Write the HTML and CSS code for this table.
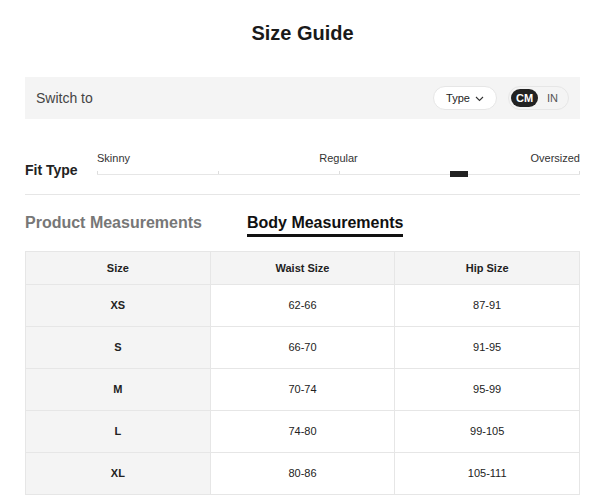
FILE: index.html
```html
<!DOCTYPE html>
<html lang="en">
<head>
<meta charset="utf-8">
<title>Size Guide</title>
<link rel="stylesheet" href="styles.css">
</head>
<body>
<div class="guide">
  <h1 class="title">Size Guide</h1>

  <div class="switch-bar">
    <span class="switch-label">Switch to</span>
    <div class="switch-controls">
      <button class="type-select">Type
        <svg class="chev" width="9" height="6" viewBox="0 0 9 6"><polyline points="1,1 4.5,4.5 8,1" fill="none" stroke="#333" stroke-width="1.1"/></svg>
      </button>
      <div class="unit-toggle">
        <span class="unit active">CM</span>
        <span class="unit">IN</span>
      </div>
    </div>
  </div>

  <div class="fit-row">
    <div class="fit-label">Fit Type</div>
    <div class="fit-scale">
      <div class="fit-names">
        <span class="name-left">Skinny</span>
        <span class="name-mid">Regular</span>
        <span class="name-right">Oversized</span>
      </div>
      <div class="fit-track">
        <span class="tick t0"></span>
        <span class="tick t1"></span>
        <span class="tick t2"></span>
        <span class="tick t3"></span>
        <span class="tick t4"></span>
        <span class="marker"></span>
      </div>
    </div>
  </div>

  <div class="tabs">
    <div class="tab">Product Measurements</div>
    <div class="tab active">Body Measurements</div>
  </div>

  <table class="size-table">
    <thead>
      <tr><th>Size</th><th>Waist Size</th><th>Hip Size</th></tr>
    </thead>
    <tbody>
      <tr><td class="size">XS</td><td>62-66</td><td>87-91</td></tr>
      <tr><td class="size">S</td><td>66-70</td><td>91-95</td></tr>
      <tr><td class="size">M</td><td>70-74</td><td>95-99</td></tr>
      <tr><td class="size">L</td><td>74-80</td><td>99-105</td></tr>
      <tr><td class="size">XL</td><td>80-86</td><td>105-111</td></tr>
    </tbody>
  </table>
</div>
</body>
</html>
```

FILE: styles.css
```css
* { box-sizing: border-box; }
html, body { margin: 0; padding: 0; background: #fff; }
body {
  font-family: "Liberation Sans", Arial, sans-serif;
  color: #222;
}
.guide {
  width: 555px;
  margin-left: 25px;
  padding-top: 21px;
}
.title {
  margin: 0;
  font-size: 20px;
  line-height: 24px;
  font-weight: bold;
  text-align: center;
  color: #1a1a1a;
}
.switch-bar {
  margin-top: 32px;
  height: 42px;
  background: #f4f4f4;
  display: flex;
  align-items: center;
  justify-content: space-between;
  padding: 0 11px 0 11px;
}
.switch-label {
  font-size: 14px;
  color: #444;
}
.switch-controls {
  display: flex;
  align-items: center;
  gap: 11px;
}
.type-select {
  height: 24px;
  width: 64px;
  border: 1px solid #e6e6e6;
  border-radius: 12px;
  background: #fff;
  font-family: inherit;
  font-size: 11px;
  color: #222;
  display: flex;
  align-items: center;
  justify-content: center;
  gap: 5px;
  padding: 0;
}
.chev { display: block; margin-top: 1px; }
.unit-toggle {
  height: 24px;
  width: 61px;
  border: 1px solid #e6e6e6;
  border-radius: 12px;
  display: flex;
  align-items: center;
  padding: 0 2px;
  gap: 4px;
}
.unit {
  font-size: 11px;
  color: #555;
  height: 18px;
  line-height: 18px;
  padding: 0 5px;
}
.unit.active {
  background: #222;
  color: #fff;
  font-weight: bold;
  border-radius: 9px;
  width: 27px;
  text-align: center;
  padding: 0;
}
.fit-row {
  margin-top: 33px;
  display: flex;
  align-items: flex-start;
  padding-bottom: 18px;
  border-bottom: 1px solid #e6e6e6;
}
.fit-label {
  width: 72px;
  font-size: 14px;
  font-weight: bold;
  line-height: 12px;
  padding-top: 12px;
  color: #222;
}
.fit-scale { flex: 1; }
.fit-names {
  display: grid;
  grid-template-columns: 1fr auto 1fr;
  font-size: 11px;
  line-height: 13px;
  color: #333;
}
.name-left { justify-self: start; }
.name-mid { justify-self: center; }
.name-right { justify-self: end; }
.fit-track {
  position: relative;
  height: 10px;
  border-bottom: 1px solid #e6e6e6;
}
.tick {
  position: absolute;
  bottom: 0;
  width: 1px;
  height: 3px;
  background: #ddd;
}
.t0 { left: 0; }
.t1 { left: 25%; }
.t2 { left: 50%; }
.t3 { left: 75%; }
.t4 { right: 0; }
.marker {
  position: absolute;
  left: calc(75% - 9px);
  top: 6px;
  width: 18px;
  height: 6px;
  background: #222;
}
.tabs {
  display: flex;
  gap: 45px;
  margin-top: 19px;
}
.tab {
  font-size: 16px;
  font-weight: bold;
  line-height: 18px;
  color: #777;
  padding-bottom: 2px;
  border-bottom: 3px solid transparent;
}
.tab.active {
  color: #111;
  border-bottom-color: #111;
}
.size-table {
  margin-top: 14px;
  width: 555px;
  table-layout: fixed;
  border-collapse: separate;
  border-spacing: 0;
  border-top: 1px solid #e6e6e6;
  border-left: 1px solid #e6e6e6;
  font-size: 11px;
  color: #222;
}
.size-table th,
.size-table td {
  padding: 0;
  text-align: center;
  border-right: 1px solid #e6e6e6;
  border-bottom: 1px solid #e6e6e6;
}
.size-table th {
  background: #f4f4f4;
  font-weight: bold;
  line-height: 32px;
}
.size-table td {
  line-height: 41px;
}
.size-table td.size {
  background: #f4f4f4;
  font-weight: bold;
}
```
